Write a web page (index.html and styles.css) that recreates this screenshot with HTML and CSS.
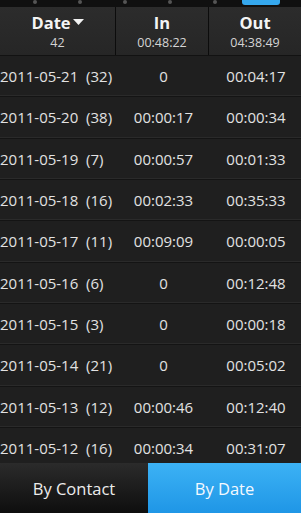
FILE: index.html
```html
<!DOCTYPE html>
<html>
<head>
<meta charset="utf-8">
<link rel="stylesheet" href="styles.css">
</head>
<body>
<div class="screen">
  <div class="strip">
    <span class="dot"></span><span class="dot"></span><span class="dot"></span><span class="dot"></span><span class="dot"></span>
    <span class="indicator"></span>
  </div>
  <div class="header">
    <div class="hcol c1"><div class="htitle">Date<svg class="caret" width="11" height="6" viewBox="0 0 11 6"><path d="M0 0H11L5.5 6Z" fill="#f2f2f2"/></svg></div><div class="hsub">42</div></div>
    <div class="hcol c2"><div class="htitle">In</div><div class="hsub">00:48:22</div></div>
    <div class="hcol c3"><div class="htitle">Out</div><div class="hsub">04:38:49</div></div>
  </div>
  <div class="list">
    <div class="row"><div class="d">2011-05-21&nbsp;&nbsp;(32)</div><div class="i">0</div><div class="o">00:04:17</div></div>
    <div class="row"><div class="d">2011-05-20&nbsp;&nbsp;(38)</div><div class="i">00:00:17</div><div class="o">00:00:34</div></div>
    <div class="row"><div class="d">2011-05-19&nbsp;&nbsp;(7)</div><div class="i">00:00:57</div><div class="o">00:01:33</div></div>
    <div class="row"><div class="d">2011-05-18&nbsp;&nbsp;(16)</div><div class="i">00:02:33</div><div class="o">00:35:33</div></div>
    <div class="row"><div class="d">2011-05-17&nbsp;&nbsp;(11)</div><div class="i">00:09:09</div><div class="o">00:00:05</div></div>
    <div class="row"><div class="d">2011-05-16&nbsp;&nbsp;(6)</div><div class="i">0</div><div class="o">00:12:48</div></div>
    <div class="row"><div class="d">2011-05-15&nbsp;&nbsp;(3)</div><div class="i">0</div><div class="o">00:00:18</div></div>
    <div class="row"><div class="d">2011-05-14&nbsp;&nbsp;(21)</div><div class="i">0</div><div class="o">00:05:02</div></div>
    <div class="row"><div class="d">2011-05-13&nbsp;&nbsp;(12)</div><div class="i">00:00:46</div><div class="o">00:12:40</div></div>
    <div class="row"><div class="d">2011-05-12&nbsp;&nbsp;(16)</div><div class="i">00:00:34</div><div class="o">00:31:07</div></div>
  </div>
  <div class="tabs">
    <div class="tab">By Contact</div>
    <div class="tab active">By Date</div>
  </div>
</div>
</body>
</html>
```
FILE: styles.css
```css
* { box-sizing: border-box; }
html, body { margin: 0; padding: 0; background: #1c1c1c; }
body { font-family: "Open Sans", "Noto Sans", sans-serif; color: #e8e8e8; }
.screen { width: 301px; height: 513px; overflow: hidden; position: relative; background: #1e1e1e; }
.strip { height: 7px; background: #101010; display: flex; align-items: flex-start; position: relative; padding-left: 33px; gap: 41px; }
.dot { width: 4px; height: 4px; border-radius: 2px; background: #555; }
.indicator { position: absolute; left: 242px; top: 0; width: 38px; height: 5px; background: #35a8ee; border-radius: 0 0 3px 3px; }
.header { height: 49px; display: flex; background: linear-gradient(#2c2c2c, #262626); border-bottom: 1px solid #121212; }
.hcol { display: flex; flex-direction: column; align-items: center; padding-top: 5px; }
.c1 { width: 116px; border-right: 1px solid #0c0c0c; }
.c2 { width: 93px; border-right: 1px solid #0c0c0c; }
.c3 { flex: 1; }
.htitle { font-weight: bold; font-size: 16.5px; color: #f4f4f4; line-height: 22px; height: 22px; display: flex; align-items: center; gap: 2px; }
.caret { margin-top: -2px; }
.hsub { font-size: 12.5px; color: #d4d4d4; line-height: 17px; }
.list { display: flex; flex-direction: column; }
.row { height: 41.33px; display: flex; align-items: center; font-size: 15px; color: #e2e2e2; border-bottom: 1px solid #141414; box-shadow: inset 0 -1px 0 #2a2a2a; background: #1f1f1f; }
.d { width: 116px; white-space: nowrap; }
.i { width: 95px; text-align: center; }
.o { flex: 1; text-align: center; }
.tabs { position: absolute; left: 0; right: 0; bottom: 0; height: 50px; display: flex; }
.tab { flex: 0 0 148px; display: flex; align-items: center; justify-content: center; font-size: 16.5px; color: #ececec; background: linear-gradient(#2b2b2b, #0e0e0e); }
.tab.active { flex: 1; color: #f4f9ff; background: linear-gradient(#3cb2f5, #1f96e6); }
```
